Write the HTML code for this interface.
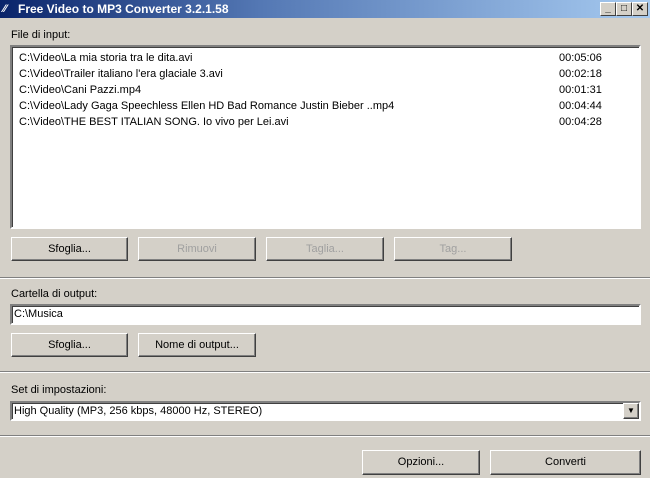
<!DOCTYPE html>
<html><head><style>
*{margin:0;padding:0;box-sizing:border-box}
body{width:650px;height:478px;background:#d4d0c8;font-family:"Liberation Sans",sans-serif;font-size:11px;color:#000;position:relative;overflow:hidden}
.a{position:absolute}
.title{left:0;top:0;width:650px;height:18px;background:linear-gradient(90deg,#0a246a 0%,#5478b4 40%,#a6caf0 100%);color:#fff;font-weight:bold;font-size:12px;line-height:18px;padding-left:18px}
.tb{top:2px;width:16px;height:14px;background:#d4d0c8;border:1px solid;border-color:#fff #404040 #404040 #fff;font-size:10px;line-height:12px;text-align:center;font-weight:bold;color:#000}
.sunk{background:#fff;border:2px solid;border-color:#808080 #fff #fff #808080;box-shadow:inset 1px 1px 0 #404040}
.btn{height:24px;border:1px solid;border-color:#fff #404040 #404040 #fff;box-shadow:inset -1px -1px 0 #808080;text-align:center;line-height:22px;background:#d4d0c8}
.dis{color:#a0a0a0}
.sep{left:0;width:650px;height:2px;border-top:1px solid #808080;border-bottom:1px solid #fff}
.row{position:absolute;left:7px;width:610px;height:16px;line-height:16px}
.row span{position:absolute;left:540px}
</style></head><body>
<div class="a title">Free Video to MP3 Converter 3.2.1.58</div>
<div class="a" style="left:3px;top:3px;color:#fff;font-size:11px;font-weight:bold">⁄⁄</div>
<div class="a tb" style="left:600px">_</div>
<div class="a tb" style="left:616px">□</div>
<div class="a tb" style="left:632px;width:16px">✕</div>

<div class="a" style="left:11px;top:29px">File di input:</div>
<div class="a sunk" style="left:10px;top:45px;width:631px;height:184px">
<div class="row" style="top:3px">C:\Video\La mia storia tra le dita.avi<span>00:05:06</span></div>
<div class="row" style="top:19px">C:\Video\Trailer italiano l'era glaciale 3.avi<span>00:02:18</span></div>
<div class="row" style="top:35px">C:\Video\Cani Pazzi.mp4<span>00:01:31</span></div>
<div class="row" style="top:51px">C:\Video\Lady Gaga Speechless Ellen HD Bad Romance Justin Bieber ..mp4<span>00:04:44</span></div>
<div class="row" style="top:67px">C:\Video\THE BEST ITALIAN SONG. Io vivo per Lei.avi<span>00:04:28</span></div>
</div>
<div class="a btn" style="left:11px;top:237px;width:117px">Sfoglia...</div>
<div class="a btn dis" style="left:138px;top:237px;width:118px">Rimuovi</div>
<div class="a btn dis" style="left:266px;top:237px;width:118px">Taglia...</div>
<div class="a btn dis" style="left:394px;top:237px;width:118px">Tag...</div>
<div class="a sep" style="top:277px"></div>

<div class="a" style="left:11px;top:288px">Cartella di output:</div>
<div class="a sunk" style="left:10px;top:304px;width:631px;height:21px;line-height:17px;padding-left:2px">C:\Musica</div>
<div class="a btn" style="left:11px;top:333px;width:117px">Sfoglia...</div>
<div class="a btn" style="left:138px;top:333px;width:118px">Nome di output...</div>
<div class="a sep" style="top:371px"></div>

<div class="a" style="left:11px;top:384px">Set di impostazioni:</div>
<div class="a sunk" style="left:10px;top:401px;width:631px;height:20px;line-height:17px;padding-left:2px">High Quality (MP3, 256 kbps, 48000 Hz, STEREO)</div>
<div class="a btn" style="left:623px;top:403px;width:16px;height:16px;line-height:14px;font-size:8px">▼</div>
<div class="a sep" style="top:435px"></div>

<div class="a btn" style="left:362px;top:450px;width:118px;height:25px">Opzioni...</div>
<div class="a btn" style="left:490px;top:450px;width:151px;height:25px">Converti</div>
</body></html>
